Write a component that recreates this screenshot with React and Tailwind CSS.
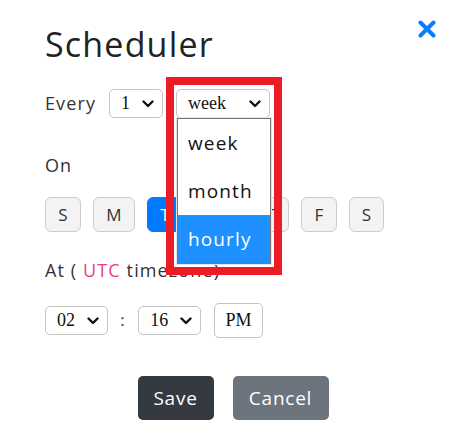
import React from 'react';

const sans = { fontFamily: '"Open Sans", "Noto Sans", sans-serif' };

function Chevron() {
    return (
        <svg width="12" height="8" viewBox="0 0 12 8" className="shrink-0">
            <path d="M1.5 1.5 L6 6 L10.5 1.5" fill="none" stroke="#111" strokeWidth="2.4" strokeLinecap="round" strokeLinejoin="round" />
        </svg>
    );
}

function FakeSelect({ value, width }) {
    return (
        <div
            className={`h-[29px] ${width} flex items-center justify-between pl-[11px] pr-[8px] border border-[#c4c4c4] rounded-[5px] bg-white text-[18px] tracking-normal text-[#111] font-['Liberation_Serif',serif]`}
        >
            <span>{value}</span>
            <Chevron />
        </div>
    );
}

export default function App() {
    const days = [
        { d: 'S', w: 'w-[36px]' },
        { d: 'M', w: 'w-[42px]' },
        { d: 'T', w: 'w-[36px]' },
        { d: 'W', w: 'w-[46px]' },
        { d: 'T', w: 'w-[36px]' },
        { d: 'F', w: 'w-[36px]' },
        { d: 'S', w: 'w-[35px]' },
    ];

    return (
        <div className="relative w-[466px] h-[445px] bg-white overflow-hidden tracking-[0.07em]" style={sans}>
            {/* close */}
            <button className="absolute left-[418px] top-[20px] w-[18px] h-[18px]">
                <svg width="18" height="18" viewBox="0 0 18 18">
                    <path d="M2.5 2.5 L15.5 15.5 M15.5 2.5 L2.5 15.5" stroke="#0a7cff" strokeWidth="4" strokeLinecap="round" />
                </svg>
            </button>

            <h1 className="pl-[45px] pt-[24px] h-[64px] text-[34px] leading-[40px] tracking-[0.035em] text-[#222] font-normal">Scheduler</h1>

            {/* Every */}
            <div className="pl-[45px] mt-[25px] h-[29px] flex items-center">
                <span className="w-[64px] text-[18px] text-[#333]">Every</span>
                <FakeSelect value="1" width="w-[54px]" />
                <div className="ml-[13px]">
                    <FakeSelect value="week" width="w-[94px]" />
                </div>
            </div>

            {/* On */}
            <div className="pl-[45px] mt-[35px] h-[24px] flex items-center text-[18px] text-[#333]">On</div>

            <div className="pl-[45px] mt-[20px] flex gap-[12px]">
                {days.map((x, i) => (
                    <button
                        key={i}
                        className={`h-[35px] ${x.w} rounded-[6px] border text-[17px] tracking-normal ${i === 2 ? 'bg-[#007bff] border-[#007bff] text-white' : 'bg-[#f3f3f3] border-[#cdcdcd] text-[#333]'}`}
                    >
                        {x.d}
                    </button>
                ))}
            </div>

            {/* At */}
            <div className="pl-[45px] mt-[26px] h-[24px] flex items-center text-[18px] text-[#333]">
                At (&nbsp;<span className="text-[#e83e8c]">UTC</span>&nbsp;timezone)
            </div>

            <div className="pl-[45px] mt-[21px] h-[35px] flex items-center">
                <FakeSelect value="02" width="w-[63px]" />
                <span className="mx-[12px] text-[18px] text-[#555] font-['Liberation_Serif',serif]">:</span>
                <FakeSelect value="16" width="w-[63px]" />
                <div className="ml-[13px] h-[35px] w-[49px] flex items-center justify-center border border-[#c4c4c4] rounded-[5px] text-[18px] tracking-normal text-[#111] font-['Liberation_Serif',serif]">
                    PM
                </div>
            </div>

            <div className="mt-[38px] flex justify-center gap-[19px]">
                <button className="w-[76px] h-[44px] rounded-[5px] bg-[#343a40] text-white text-[19px] tracking-[0.04em]">Save</button>
                <button className="w-[96px] h-[44px] rounded-[5px] bg-[#6c757d] text-white text-[19px] tracking-[0.04em]">Cancel</button>
            </div>

            {/* open dropdown list */}
            <div className="absolute left-[176px] top-[117px] w-[96px] h-[148px] bg-[#e4e4e4] p-[1px]">
                <div className="w-full h-full border border-[#767676] bg-white flex flex-col">
                    <div className="h-[48px] flex items-center pl-[10px] text-[19px] text-[#111]">week</div>
                    <div className="h-[48px] flex items-center pl-[10px] text-[19px] text-[#111]">month</div>
                    <div className="h-[48px] flex items-center pl-[10px] text-[19px] text-white bg-[#1e90ff]">hourly</div>
                </div>
            </div>

            {/* annotation box */}
            <div className="absolute left-[166px] top-[77px] w-[116px] h-[198px] border-[8px] border-[#ed1c24]" />
        </div>
    );
}
